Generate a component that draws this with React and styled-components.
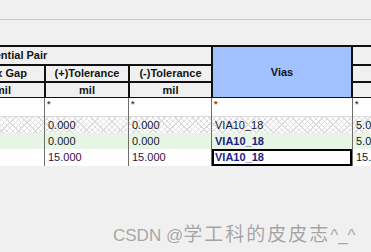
import styled, { createGlobalStyle } from "styled-components";

const GlobalStyle = createGlobalStyle`
  html, body {
    margin: 0;
    padding: 0;
    background: #f0f0f0;
  }
`;

const COLS = "68px 82px 81px 138px 80px";
const BODY_COLS = "68px 83px 82px 140px 80px";

const rows = [
  { tone: "hatch", plus: "0.000", minus: "0.000", via: "VIA10_18", last: "5.000" },
  { tone: "green", plus: "0.000", minus: "0.000", via: "VIA10_18", last: "5.000", strong: true },
  { tone: "white", plus: "15.000", minus: "15.000", via: "VIA10_18", last: "15.000", strong: true, selected: true, purple: true },
];

function App() {
  return (
    <Page>
      <GlobalStyle />
      <TopBar />
      <GridWindow>
        <Scroller>
          <Header>
            <GroupCell>Differential Pair</GroupCell>
            <ViasCell>Vias</ViasCell>
            <HeadCell $col={5} $row={1} />
            <HeadCell $col={1} $row={2} $shift={-6}>Max Gap</HeadCell>
            <HeadCell $col={2} $row={2}>(+)Tolerance</HeadCell>
            <HeadCell $col={3} $row={2}>(-)Tolerance</HeadCell>
            <HeadCell $col={5} $row={2} />
            <HeadCell $col={1} $row={3} $shift={-7}>mil</HeadCell>
            <HeadCell $col={2} $row={3}>mil</HeadCell>
            <HeadCell $col={3} $row={3}>mil</HeadCell>
            <HeadCell $col={5} $row={3} />
          </Header>
          <Body>
            <StarCell />
            <StarCell>*</StarCell>
            <StarCell>*</StarCell>
            <StarCell>*</StarCell>
            <StarCell>*</StarCell>
            {rows.map((r, i) => [
              <DataCell key={`a${i}`} $tone={r.tone} />,
              <DataCell key={`b${i}`} $tone={r.tone} $purple={r.purple}>{r.plus}</DataCell>,
              <DataCell key={`c${i}`} $tone={r.tone} $purple={r.purple}>{r.minus}</DataCell>,
              <DataCell key={`d${i}`} $tone={r.tone} $strong={r.strong} $selected={r.selected}>
                {r.via}
              </DataCell>,
              <DataCell key={`e${i}`} $tone={r.tone}>{r.last}</DataCell>,
            ])}
          </Body>
        </Scroller>
      </GridWindow>
      <Watermark>
        CSDN @<Cjk>学工科的皮皮志</Cjk>^_^
      </Watermark>
    </Page>
  );
}

export default App;

const Page = styled.div`
  position: relative;
  width: 371px;
  height: 252px;
  overflow: hidden;
  background: #f0f0f0;
  font-family: "Liberation Sans", Arial, sans-serif;
`;

const TopBar = styled.div`
  height: 19px;
  border-bottom: 1px solid #c6c6c6;
`;

const GridWindow = styled.div`
  margin-top: 25px;
  width: 371px;
  overflow: hidden;
`;

// the grid is scrolled a little to the right, so the first column is cut
const Scroller = styled.div`
  margin-left: -24px;
  width: 460px;
`;

const Header = styled.div`
  display: grid;
  grid-template-columns: ${COLS};
  grid-template-rows: 17px 15px 14px;
  gap: 2px;
  padding: 2px 0 1px;
  background: #111;
`;

const HeadCell = styled.div`
  grid-column: ${(p) => p.$col};
  grid-row: ${(p) => p.$row};
  background: #f0f0f0;
  color: #141414;
  font-size: 11px;
  font-weight: bold;
  line-height: ${(p) => (p.$row === 2 ? "15px" : "14px")};
  text-align: center;
  white-space: nowrap;
  overflow: hidden;
  padding-left: ${(p) => (p.$shift > 0 ? p.$shift * 2 : 0)}px;
  padding-right: ${(p) => (p.$shift < 0 ? -p.$shift * 2 : 0)}px;
`;

const GroupCell = styled.div`
  grid-column: 1 / 4;
  grid-row: 1;
  background: #f0f0f0;
  color: #141414;
  font-size: 11px;
  font-weight: bold;
  line-height: 17px;
  text-indent: -10px;
  white-space: nowrap;
  overflow: hidden;
`;

const ViasCell = styled.div`
  grid-column: 4;
  grid-row: 1 / 4;
  display: flex;
  align-items: center;
  justify-content: center;
  background: #a2c1ff;
  color: #141414;
  font-size: 11px;
  font-weight: bold;
`;

const Body = styled.div`
  display: grid;
  grid-template-columns: ${BODY_COLS};
  grid-template-rows: 19px 16px 16px 17px;
  column-gap: 1px;
  background: #6e6e6e;
`;

const StarCell = styled.div`
  background: #ffffff;
  border-bottom: 1px solid #dcdcdc;
  color: #6a4a08;
  font-size: 9px;
  font-weight: bold;
  line-height: 9px;
  padding: 2px 0 0 2px;
`;

const toneBg = {
  white: "#ffffff",
  green: "#e7f5e5",
  hatch: `repeating-linear-gradient(45deg, transparent 0 3px, #dcdcdc 3px 4px),
    repeating-linear-gradient(-45deg, #ffffff 0 3px, #dcdcdc 3px 4px)`,
};

const DataCell = styled.div`
  box-sizing: border-box;
  background: ${(p) => toneBg[p.$tone]};
  color: ${(p) => (p.$strong ? "#1c1c86" : p.$purple ? "#3c0c44" : "#16162c")};
  font-size: 11px;
  font-weight: ${(p) => (p.$strong ? "bold" : "normal")};
  line-height: ${(p) => (p.$selected ? "13px" : "16px")};
  padding-left: ${(p) => (p.$selected ? "1px" : "3px")};
  border: ${(p) => (p.$selected ? "2px solid #000" : "none")};
  white-space: nowrap;
  overflow: hidden;
`;

const Watermark = styled.div`
  position: absolute;
  left: 113px;
  top: 221px;
  color: #a4a4a4;
  font-size: 17px;
  line-height: 24px;
  white-space: nowrap;
  text-shadow: 0 0 1px #ffffff;
`;

const Cjk = styled.span`
  font-family: "Noto Sans CJK SC", sans-serif;
  font-size: 19px;
  letter-spacing: 2px;
`;
